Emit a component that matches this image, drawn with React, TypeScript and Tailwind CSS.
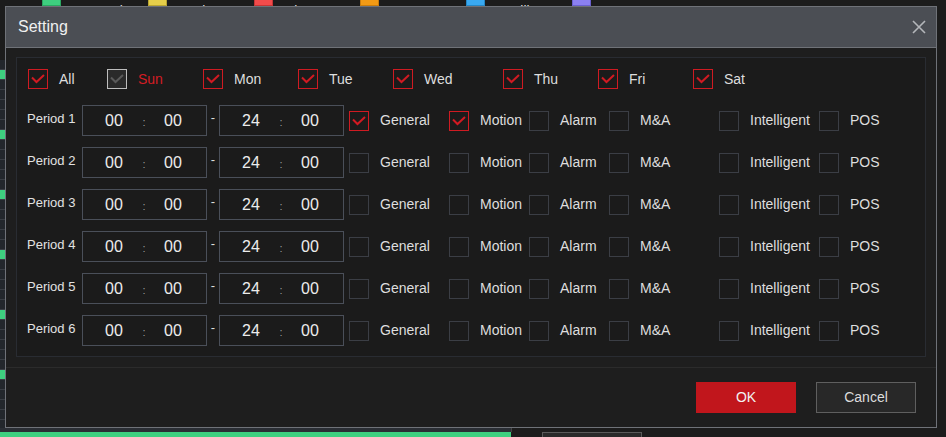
import React from "react";

const FONT = { fontFamily: '"Liberation Sans", Arial, sans-serif' };

type CbVariant = "red" | "off" | "gray";

function Check({ variant }: { variant: CbVariant }) {
  const box =
    variant === "red"
      ? "border-[#cf1b22] bg-transparent"
      : variant === "gray"
      ? "border-[#bdbdbd] bg-[#2a2a2a]"
      : "border-[#3b3e45] bg-transparent";
  return (
    <div className={`w-[20px] h-[20px] border shrink-0 relative ${box}`}>
      {variant !== "off" && (
        <svg width="20" height="20" viewBox="0 0 20 20" className="absolute left-[-1px] top-[-1px]">
          <polyline
            points="4,8.5 8.5,13 16,6"
            fill="none"
            stroke={variant === "red" ? "#d11a22" : "#5a5a5a"}
            strokeWidth="2"
          />
        </svg>
      )}
    </div>
  );
}

const days: { label: string; w: string; variant: CbVariant; red?: boolean }[] = [
  { label: "All", w: "w-[79px]", variant: "red" },
  { label: "Sun", w: "w-[96px]", variant: "gray", red: true },
  { label: "Mon", w: "w-[95px]", variant: "red" },
  { label: "Tue", w: "w-[95px]", variant: "red" },
  { label: "Wed", w: "w-[110px]", variant: "red" },
  { label: "Thu", w: "w-[95px]", variant: "red" },
  { label: "Fri", w: "w-[95px]", variant: "red" },
  { label: "Sat", w: "w-[95px]", variant: "red" },
];

const types: { label: string; w: string }[] = [
  { label: "General", w: "w-[100px]" },
  { label: "Motion", w: "w-[80px]" },
  { label: "Alarm", w: "w-[80px]" },
  { label: "M&A", w: "w-[110px]" },
  { label: "Intelligent", w: "w-[100px]" },
  { label: "POS", w: "w-[70px]" },
];

function TimeBox({ a, b }: { a: string; b: string }) {
  return (
    <div className="w-[125px] h-[31px] border border-[#4a4f59] flex items-center text-[16px] text-[#ececec]">
      <span className="ml-[22px] w-[19px]">{a}</span>
      <span className="w-[40px] text-center text-[11px] text-[#9a9a9a] pt-[3px]">:</span>
      <span className="w-[19px]">{b}</span>
    </div>
  );
}

const legend = [
  { c: "bg-[#3ecf7f] border-[#2aa862]", t: "General" },
  { c: "bg-[#e6cf4a] border-[#b9a532]", t: "Motion" },
  { c: "bg-[#f24b4b] border-[#c53535]", t: "Alarm" },
  { c: "bg-[#f29a14] border-[#c97c0c]", t: "M&A" },
  { c: "bg-[#39a9f1] border-[#2586c4]", t: "Intelligent" },
  { c: "bg-[#8b80f1] border-[#6a60cf]", t: "POS" },
];

export default function App() {
  const rows = [1, 2, 3, 4, 5, 6];
  const strip = Array.from({ length: 37 }, (_, i) => i);
  return (
    <div className="w-[946px] h-[437px] relative overflow-hidden bg-[#1c1c1c]" style={FONT}>
      {/* background content */}
      <div className="flex mt-[-9px] ml-[42px] gap-0">
        {legend.map((l) => (
          <div key={l.t} className="flex items-start w-[106px]">
            <div className={`w-[19px] h-[15px] border ${l.c}`} />
            <span className="ml-[12px] mt-[10px] text-[14px] text-[#dddddd]">{l.t}</span>
          </div>
        ))}
      </div>
      <div className="absolute left-0 top-[60px] w-[6px] flex flex-col">
        {strip.map((i) => (
          <div
            key={i}
            className={`h-[10px] border-b border-[#3a3e44] ${i % 6 === 1 ? "bg-[#3ecf7f]" : "bg-[#23272c]"}`}
          />
        ))}
      </div>
      <div className="absolute left-0 top-[428px] w-[512px] h-[4px] bg-[#2a2e34] border-r border-[#444]" />
      <div className="absolute left-0 top-[432px] w-[511px] h-[6px] bg-[#3ecf7f]" />
      <div className="absolute left-[542px] top-[432px] w-[100px] h-[10px] bg-[#2a2a2a] border border-[#5a5a5a]" />

      {/* modal dialog */}
      <div className="absolute left-[5px] top-[6px] w-[932px] h-[422px] border border-[#6f7278] bg-[#1e1e1e] flex flex-col">
        <div className="h-[41px] bg-[#4b4e54] border-b border-[#6f7278] flex items-center justify-between pl-[12px] pr-[10px] shrink-0">
          <span className="text-[16px] text-[#f0f0f0]">Setting</span>
          <svg width="14" height="14" viewBox="0 0 14 14">
            <path d="M1 1 L13 13 M13 1 L1 13" stroke="#b4b6ba" strokeWidth="1.6" />
          </svg>
        </div>
        <div className="px-[10px] pt-[9px]">
          <div className="border border-[#292c32] bg-[#1b1b1b] h-[300px] pl-[10px] pt-[11px]">
            <div className="flex items-center h-[20px] pl-[1px]">
              {days.map((d) => (
                <div key={d.label} className={`flex items-center ${d.w}`}>
                  <Check variant={d.variant} />
                  <span className={`ml-[11px] text-[14px] ${d.red ? "text-[#d41d24]" : "text-[#dedede]"}`}>
                    {d.label}
                  </span>
                </div>
              ))}
            </div>
            <div className="flex flex-col gap-[11px] mt-[16px]">
              {rows.map((r) => (
                <div key={r} className="flex items-center h-[31px]">
                  <span className="w-[55px] text-[13px] text-[#e2e2e2] pb-[3px]">Period {r}</span>
                  <TimeBox a="00" b="00" />
                  <span className="w-[12px] text-center text-[13px] text-[#dddddd] pb-[6px]">-</span>
                  <TimeBox a="24" b="00" />
                  <div className="flex items-center ml-[5px]">
                    {types.map((t, i) => (
                      <div key={t.label} className={`flex items-center ${t.w}`}>
                        <Check variant={r === 1 && i < 2 ? "red" : "off"} />
                        <span className="ml-[11px] text-[14px] text-[#dedede]">{t.label}</span>
                      </div>
                    ))}
                  </div>
                </div>
              ))}
            </div>
          </div>
        </div>
        <div className="mt-[10px] border-t border-[#2b2b2b]" />
        <div className="flex justify-end gap-[20px] pr-[20px] mt-[14px]">
          <button className="w-[100px] h-[31px] bg-[#c1161c] text-[14px] text-[#f2f2f2]">OK</button>
          <button className="w-[100px] h-[31px] bg-[#282828] border border-[#5f5f5f] text-[14px] text-[#dcdcdc]">
            Cancel
          </button>
        </div>
      </div>
    </div>
  );
}
